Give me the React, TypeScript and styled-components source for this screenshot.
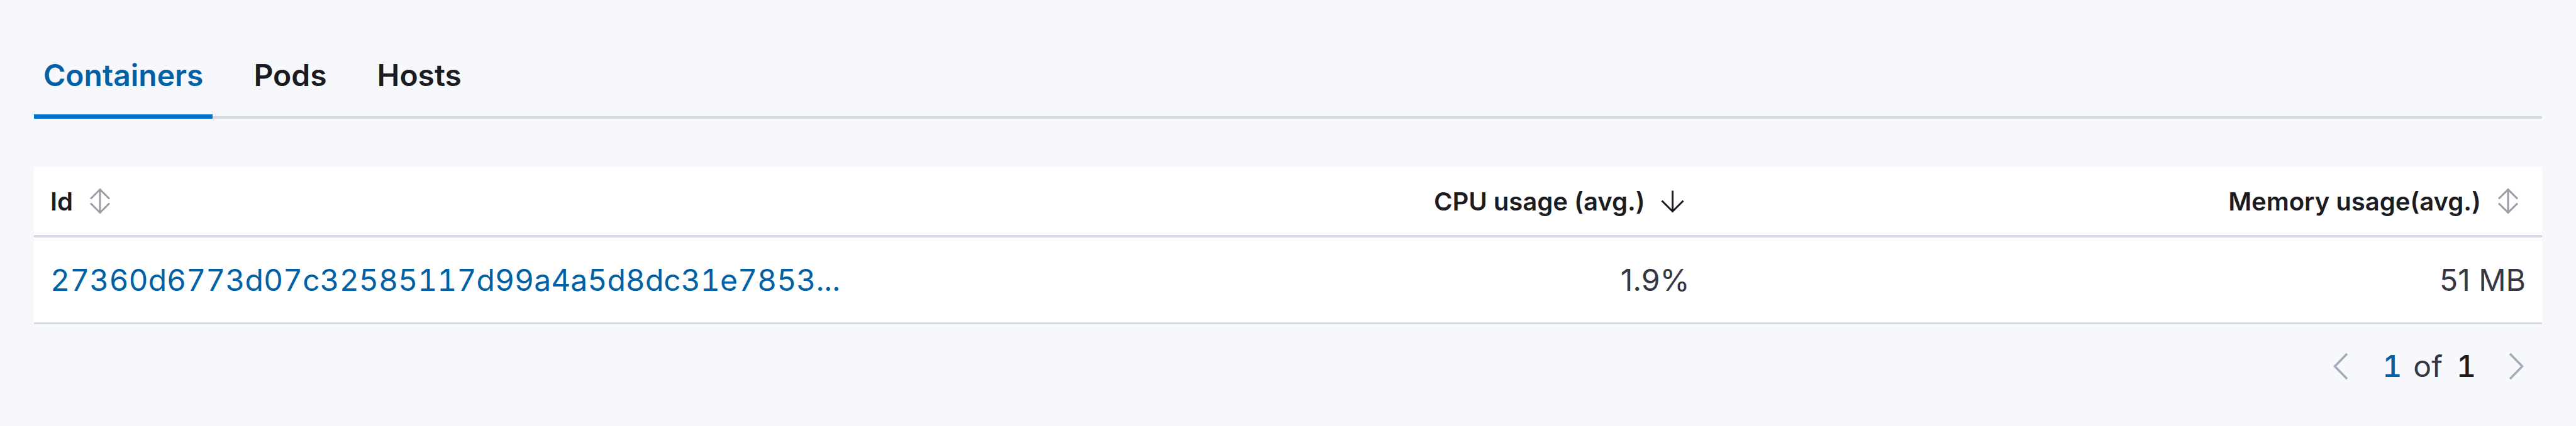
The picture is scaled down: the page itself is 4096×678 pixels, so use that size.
import React from 'react';
import styled, { createGlobalStyle } from 'styled-components';

const Global = createGlobalStyle`
  html, body {
    margin: 0;
    padding: 0;
    background: #f7f8fc;
  }
  body {
    font-family: Inter, "Noto Sans", sans-serif;
    -webkit-font-smoothing: antialiased;
  }
`;

const Page = styled.div`
  box-sizing: border-box;
  min-height: 678px;
  padding: 84px 54px 40px;
  background: #f7f8fc;
`;

const TabList = styled.div`
  display: flex;
  gap: 50px;
  box-shadow: inset 0 -4px 0 #d3dae6;
`;

const Tab = styled.button<{ $selected?: boolean }>`
  appearance: none;
  border: 0;
  margin: 0;
  background: none;
  padding: 0 15px 33px;
  font: 600 48px/72px Inter, sans-serif;
  color: ${(p) => (p.$selected ? '#0061a6' : '#1a1c21')};
  box-shadow: ${(p) => (p.$selected ? 'inset 0 -7px 0 #0077cc' : 'none')};
  cursor: pointer;
`;

const Table = styled.div`
  margin-top: 77px;
  background: #ffffff;
  display: grid;
  grid-template-columns: repeat(3, minmax(0, 1fr));
`;

const HeadCell = styled.div<{ $right?: boolean }>`
  height: 108px;
  padding: 0 26px;
  display: flex;
  align-items: center;
  justify-content: ${(p) => (p.$right ? 'flex-end' : 'flex-start')};
  gap: 15px;
  border-bottom: 4px solid #d3dae6;
  font: 600 40px Inter, sans-serif;
  color: #1a1c21;
  white-space: nowrap;
`;

const Cell = styled.div<{ $right?: boolean }>`
  height: 135px;
  padding: 0 26px;
  display: flex;
  align-items: center;
  justify-content: ${(p) => (p.$right ? 'flex-end' : 'flex-start')};
  border-bottom: 3px solid #d3dae6;
  font: 400 48px Inter, sans-serif;
  color: #343741;
  min-width: 0;
`;

const IdLink = styled.a`
  color: #0061a6;
  text-decoration: none;
  white-space: nowrap;
  overflow: hidden;
  text-overflow: ellipsis;
  font-variant-numeric: tabular-nums;
`;

const SortIcon = styled.svg`
  flex: none;
  width: 56px;
  height: 56px;
`;

const Pager = styled.nav`
  margin-top: 31px;
  height: 72px;
  padding-right: 29px;
  display: flex;
  justify-content: flex-end;
  align-items: center;
  font: 400 48px/72px Inter, sans-serif;
  font-variant-numeric: tabular-nums;
  color: #343741;
`;

const PagerArrow = styled.svg<{ $gapLeft?: number; $gapRight?: number }>`
  flex: none;
  width: 24px;
  height: 44px;
  margin-left: ${(p) => p.$gapLeft ?? 0}px;
  margin-right: ${(p) => p.$gapRight ?? 0}px;
`;

const PageNum = styled.span<{ $current?: boolean }>`
  font-weight: 500;
  color: ${(p) => (p.$current ? '#0061a6' : '#1a1c21')};
`;

const Of = styled.span`
  margin: 0 22px 0 18px;
  color: #343741;
`;

const Sortable = () => (
  <SortIcon viewBox="0 0 56 56" fill="none" stroke="#9a9ca3" strokeWidth={3}>
    <path d="M28 9.5V46.5" />
    <path d="M13 24.5L28 9.5L43 24.5" />
    <path d="M13 31.5L28 46.5L43 31.5" />
  </SortIcon>
);

const ArrowDown = () => (
  <SortIcon viewBox="0 0 56 56" fill="none" stroke="#1a1c21" strokeWidth={3}>
    <path d="M28.5 11.5V44.5" />
    <path d="M11.5 27.5L28.5 44.5L45.5 27.5" />
  </SortIcon>
);

export default function App() {
  return (
    <Page>
      <Global />
      <TabList>
        <Tab $selected>Containers</Tab>
        <Tab>Pods</Tab>
        <Tab>Hosts</Tab>
      </TabList>

      <Table>
        <HeadCell>
          Id
          <Sortable />
        </HeadCell>
        <HeadCell $right>
          CPU usage (avg.)
          <ArrowDown />
        </HeadCell>
        <HeadCell $right>
          Memory usage(avg.)
          <Sortable />
        </HeadCell>

        <Cell>
          <IdLink href="#">27360d6773d07c32585117d99a4a5d8dc31e7853...</IdLink>
        </Cell>
        <Cell $right>1.9%</Cell>
        <Cell $right>51 MB</Cell>
      </Table>

      <Pager>
        <PagerArrow viewBox="0 0 24 44" fill="none" stroke="#a2abba" strokeWidth={3.5} $gapRight={54}>
          <path d="M22 2L2.5 22L22 42" />
        </PagerArrow>
        <PageNum $current>1</PageNum>
        <Of>of</Of>
        <PageNum>1</PageNum>
        <PagerArrow viewBox="0 0 24 44" fill="none" stroke="#a2abba" strokeWidth={3.5} $gapLeft={52}>
          <path d="M2 2L21.5 22L2 42" />
        </PagerArrow>
      </Pager>
    </Page>
  );
}
